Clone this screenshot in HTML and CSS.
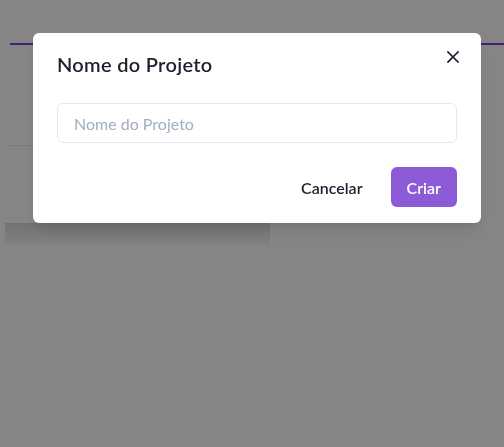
FILE: index.html
```html
<!DOCTYPE html>
<html lang="pt-BR">
<head>
  <meta charset="UTF-8" />
  <meta name="viewport" content="width=device-width, initial-scale=1.0"/>
  <title>Novo Projeto</title>
  <link rel="stylesheet" href="styles.css">
</head>
<body>

  <div class="page">
    <div class="topbar"></div>
    <div class="divider"></div>
    <div class="shade"></div>
  </div>

  <div class="overlay"></div>

  <section class="modal" role="dialog" aria-labelledby="modalTitle">
    <header class="modal-header" id="modalTitle">Nome do Projeto</header>
    <button class="close-btn" aria-label="Fechar">
      <svg width="12" height="12" viewBox="0 0 12 12">
        <path d="M1 1 L11 11 M11 1 L1 11" stroke="#1a202c" stroke-width="1.7" stroke-linecap="square"/>
      </svg>
    </button>
    <div class="modal-body">
      <input class="text-input" type="text" placeholder="Nome do Projeto">
    </div>
    <footer class="modal-footer">
      <button class="btn btn-ghost">Cancelar</button>
      <button class="btn btn-primary">Criar</button>
    </footer>
  </section>

</body>
</html>
```

FILE: styles.css
```css
* {
  margin: 0;
  padding: 0;
  box-sizing: border-box;
}

body {
  font-family: Lato, "Open Sans", sans-serif;
  color: #1a202c;
  background: #fff;
  overflow: hidden;
}

.page {
  height: 447px;
}

.topbar {
  height: 45px;
  margin-left: 10px;
  border-bottom: 2px solid #7c3aed;
}

.divider {
  margin-top: 100px;
  margin-left: 8px;
  width: 300px;
  border-top: 1px solid #e2e8f0;
}

.shade {
  margin-top: 77px;
  margin-left: 5px;
  width: 265px;
  height: 22px;
  background: linear-gradient(to bottom, rgba(0, 0, 0, 0.14), rgba(0, 0, 0, 0.03));
}

.overlay {
  position: fixed;
  inset: 0;
  background: rgba(0, 0, 0, 0.48);
}

.modal {
  position: fixed;
  top: 33px;
  left: 33px;
  width: 448px;
  background: #fff;
  border-radius: 6px;
  box-shadow: 0 10px 15px -3px rgba(0, 0, 0, 0.1), 0 4px 6px -2px rgba(0, 0, 0, 0.05);
}

.modal-header {
  padding: 16px 24px;
  font-size: 20px;
  font-weight: 600;
  line-height: 30px;
  letter-spacing: 0.3px;
}

.close-btn {
  position: absolute;
  top: 8px;
  right: 12px;
  width: 32px;
  height: 32px;
  display: flex;
  align-items: center;
  justify-content: center;
  background: none;
  border: none;
  border-radius: 6px;
  cursor: pointer;
}

.modal-body {
  padding: 8px 24px;
}

.text-input {
  width: 100%;
  height: 40px;
  padding: 0 16px;
  border: 1px solid #e2e8f0;
  border-radius: 6px;
  font-family: inherit;
  font-size: 16px;
  color: #1a202c;
  outline: none;
}

.text-input::placeholder {
  color: #a0aec0;
}

.modal-footer {
  display: flex;
  justify-content: flex-end;
  gap: 12px;
  padding: 16px 24px;
}

.btn {
  height: 40px;
  padding: 0 16px;
  border: none;
  border-radius: 6px;
  font-family: inherit;
  font-size: 16px;
  font-weight: 600;
  cursor: pointer;
}

.btn-ghost {
  background: transparent;
  color: #1a202c;
}

.btn-primary {
  background: #8e5bd8;
  color: #fff;
}
```
